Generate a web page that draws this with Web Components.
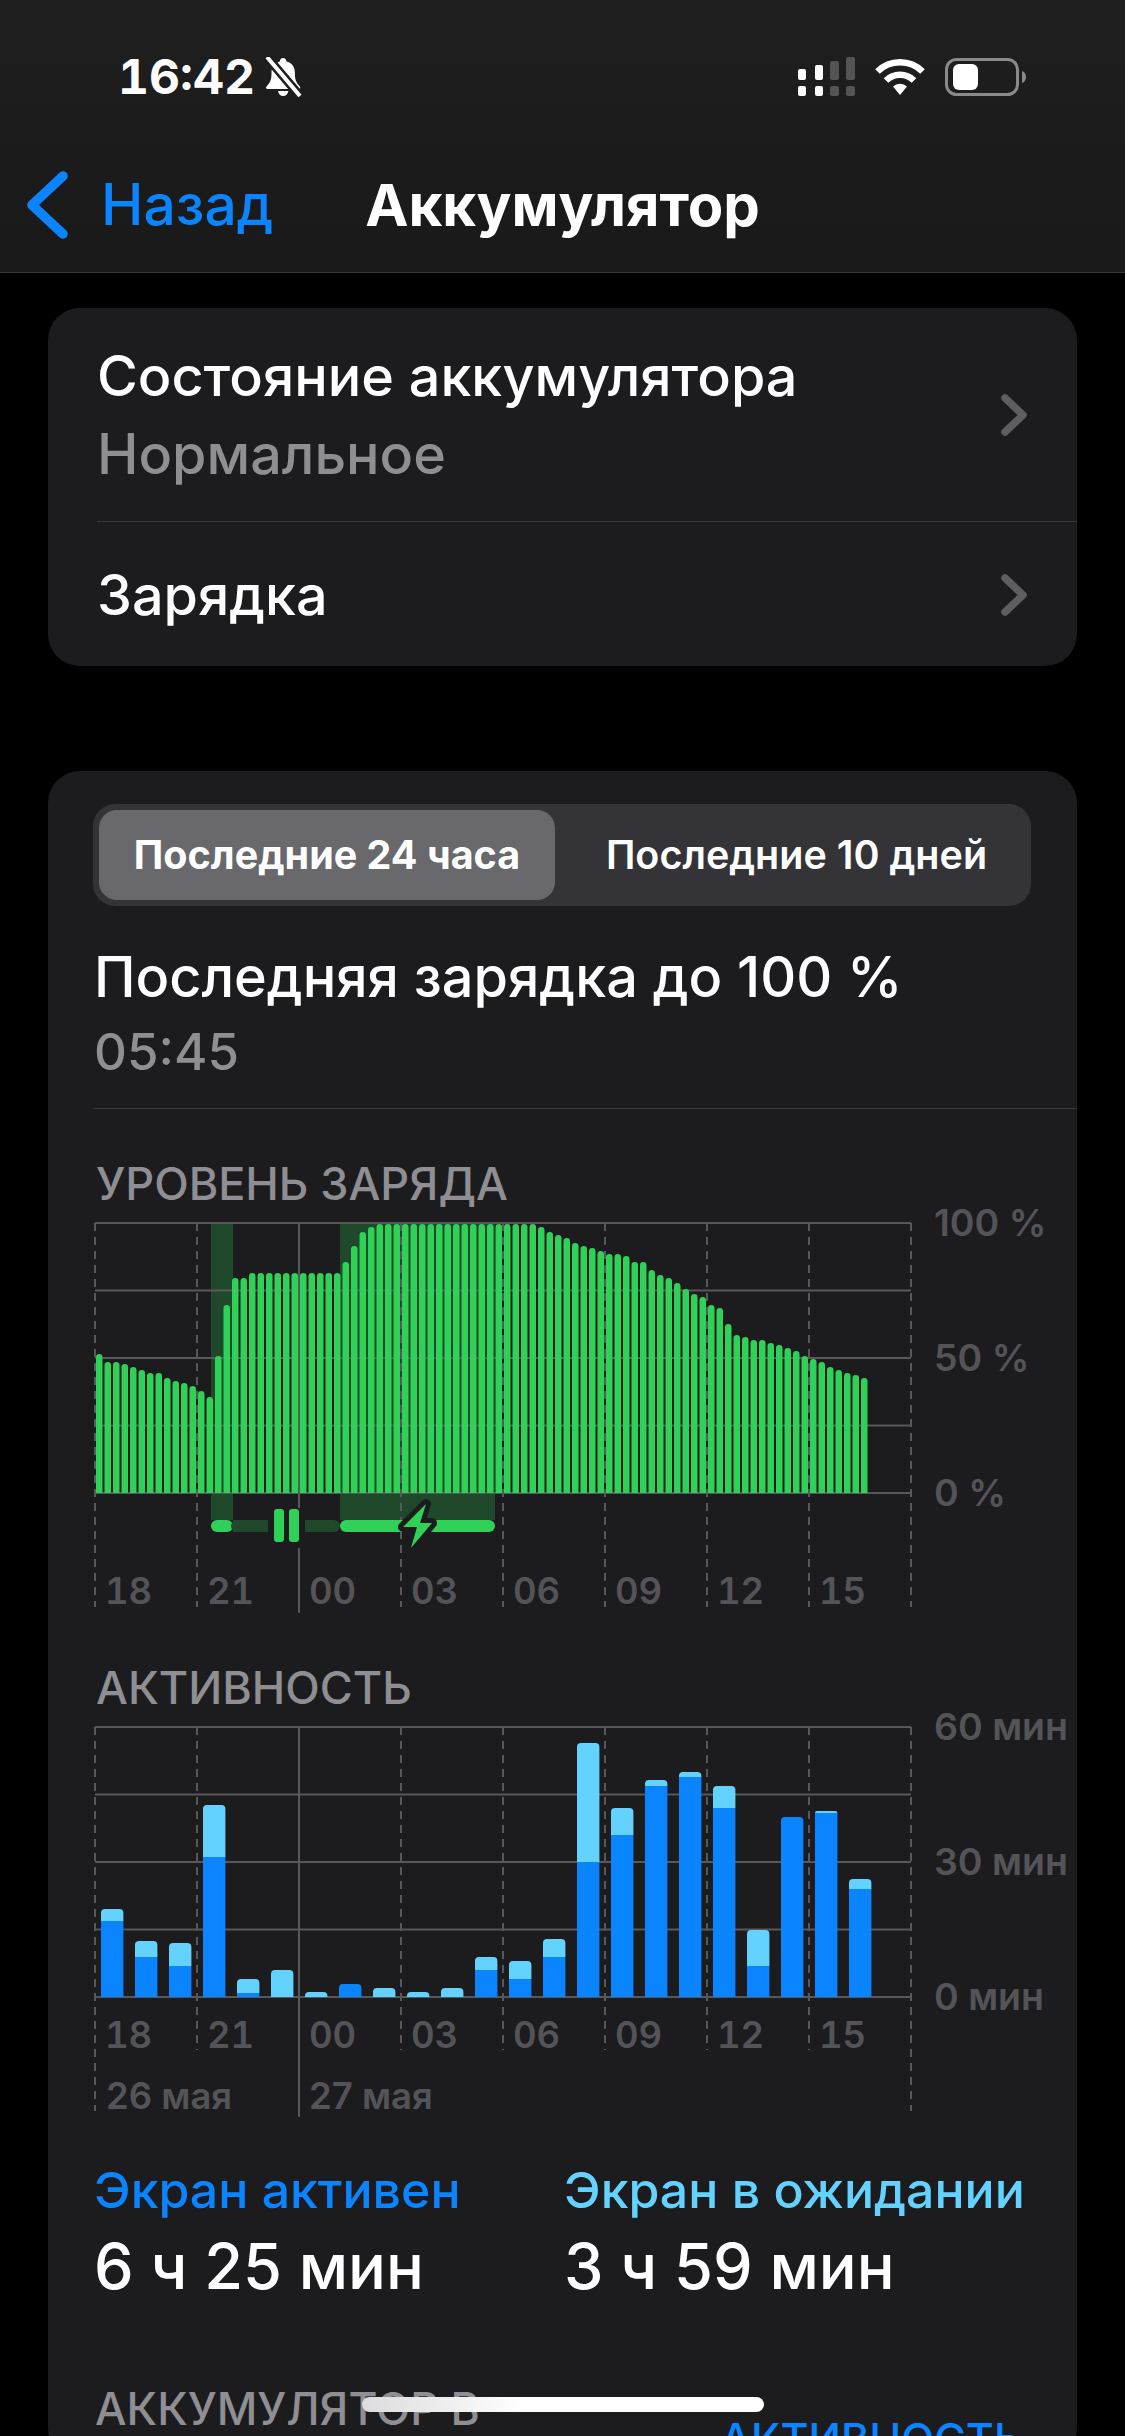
<!DOCTYPE html>
<html lang="ru">
<head>
<meta charset="utf-8">
<title>Аккумулятор</title>
<style>
	html, body { margin: 0; padding: 0; background: #000; }
	body { font-family: Inter, "Noto Sans", sans-serif; color: #fff; }
</style>
</head>
<body>
<battery-screen>
	<status-bar slot="top" time="16:42"></status-bar>
	<nav-bar slot="top" back="Назад">Аккумулятор</nav-bar>

	<settings-card>
		<settings-row sub="Нормальное" tall>Состояние аккумулятора</settings-row>
		<settings-row>Зарядка</settings-row>
	</settings-card>

	<usage-card>
		<segment-control first="Последние 24 часа" second="Последние 10 дней"></segment-control>
		<last-charge time="05:45">Последняя зарядка до 100 %</last-charge>
		<usage-chart kind="level" heading="УРОВЕНЬ ЗАРЯДА"></usage-chart>
		<usage-chart kind="activity" heading="АКТИВНОСТЬ"></usage-chart>
		<screen-legend></screen-legend>
		<section-footer></section-footer>
	</usage-card>
</battery-screen>

<script>
class BatteryScreen extends HTMLElement {
	constructor() {
		super();
		let tpl = document.createElement('template');
		tpl.innerHTML = `
			<style>
				:host {
					display: block;
					position: relative;
					width: 1125px;
					height: 2436px;
					overflow: hidden;
					background: #000;
				}
				.top {
					background: linear-gradient(#1f1f1f, #191919);
					border-bottom: 1px solid #363636;
					height: 272px;
				}
				.home {
					position: absolute;
					left: 362px;
					top: 2397px;
					width: 402px;
					height: 15px;
					border-radius: 8px;
					background: linear-gradient(90deg, #dcdcdc, #fff 40%);
				}
			</style>
			<div class="top"><slot name="top"></slot></div>
			<slot></slot>
			<div class="home"></div>
		`;
		this.attachShadow({mode: 'open'}).appendChild(tpl.content.cloneNode(true));
	}
}

class StatusBar extends HTMLElement {
	constructor() {
		super();
		let root = this.attachShadow({mode: 'open'});
		root.innerHTML = `
			<style>
				:host {
					display: flex;
					align-items: center;
					justify-content: space-between;
					height: 153px;
					padding: 0 99px 0 118px;
					box-sizing: border-box;
				}
				.left { display: flex; align-items: center; gap: 9px; }
				.time { font-size: 48px; font-weight: 700; font-feature-settings: "tnum"; line-height: 54px; }
				.right { display: flex; align-items: center; gap: 20px; }
				svg { display: block; }
			</style>
			<div class="left">
				<span class="time">${this.getAttribute('time')}</span>
				<svg width="40" height="40" viewBox="0 0 40 40">
					<path d="M19 1c-2 0-3 1.500-3.200 3.500C9.500 6 7.500 11 7.500 16c0 5-.5 9-5 13.500-1 1.300-.3 2.500 1.200 2.500h31c1.500 0 2.200-1.200 1.200-2.500-4.500-4.500-5-8.500-5-13.500 0-5-2-10-8.300-11.500C22 2.500 21 1 19 1zM14 34c.6 3 2.500 5 5.200 5s4.600-2 5.200-5z" fill="#fff"/>
					<path d="M3 0l33 39" stroke="#1e1e1e" stroke-width="9"/>
					<path d="M3 0l33 39" stroke="#fff" stroke-width="4"/>
				</svg>
			</div>
			<div class="right">
				<svg width="57" height="40" viewBox="0 0 57 40">
					<rect x="0" y="12" width="8" height="11" rx="2" fill="#fff"/>
					<rect x="17" y="8" width="8" height="15" rx="2" fill="#fff"/>
					<rect x="32" y="4" width="9" height="19" rx="2" fill="#545454"/>
					<rect x="48" y="0" width="9" height="23" rx="2" fill="#545454"/>
					<rect x="0" y="29" width="8" height="10" rx="2" fill="#fff"/>
					<rect x="17" y="29" width="8" height="10" rx="2" fill="#fff"/>
					<rect x="32" y="29" width="9" height="10" rx="2" fill="#545454"/>
					<rect x="48" y="29" width="9" height="10" rx="2" fill="#545454"/>
				</svg>
				<svg width="50" height="37" viewBox="0 0 50 37">
					<path d="M2.500 13.500a32 32 0 0 1 45 0" fill="none" stroke="#fff" stroke-width="6.500"/>
					<path d="M11 22.500a20 20 0 0 1 28 0" fill="none" stroke="#fff" stroke-width="6.500"/>
					<path d="M18 28.500a10 10 0 0 1 14 0L25 37z" fill="#fff"/>
				</svg>
				<svg width="81" height="38" viewBox="0 0 81 38">
					<rect x="1.500" y="1.500" width="71" height="35" rx="10" fill="none" stroke="#8a8a8a" stroke-width="3"/>
					<rect x="8" y="6" width="25" height="26" rx="6" fill="#fff"/>
					<path d="M77 13c2.500 .8 4 3 4 6s-1.500 5.200-4 6z" fill="#8a8a8a"/>
				</svg>
			</div>
		`;
	}
}

class NavBar extends HTMLElement {
	constructor() {
		super();
		let root = this.attachShadow({mode: 'open'});
		root.innerHTML = `
			<style>
				:host {
					display: grid;
					grid-template-columns: 1fr auto 1fr;
					align-items: center;
					height: 103px;
					font-size: 57px;
					line-height: 62px;
				}
				.back {
					display: flex;
					align-items: center;
					gap: 31px;
					padding-left: 26px;
					color: #0a84ff;
					font-weight: 500;
				}
				.title { font-size: 58px; font-weight: 700; }
				svg { display: block; }
			</style>
			<div class="back">
				<svg width="44" height="68" viewBox="0 0 44 68">
					<path d="M37 5L6 34l31 29" fill="none" stroke="#0a84ff" stroke-width="9.500" stroke-linecap="round" stroke-linejoin="round"/>
				</svg>
				<span>${this.getAttribute('back')}</span>
			</div>
			<div class="title"><slot></slot></div>
			<div></div>
		`;
	}
}

class SettingsCard extends HTMLElement {
	constructor() {
		super();
		this.attachShadow({mode: 'open'}).innerHTML = `
			<style>
				:host {
					display: block;
					margin: 35px 48px 0;
					background: #1c1c1e;
					border-radius: 32px;
				}
			</style>
			<slot></slot>
		`;
	}
}

class SettingsRow extends HTMLElement {
	constructor() {
		super();
		let sub = this.getAttribute('sub');
		let root = this.attachShadow({mode: 'open'});
		root.innerHTML = `
			<style>
				:host {
					display: flex;
					position: relative;
					align-items: center;
					justify-content: space-between;
					box-sizing: border-box;
					height: 144px;
					padding: 2px 48px 0 49px;
					font-size: 55.700px;
					font-weight: 500;
				}
				:host([tall]) {
					height: 214px;
					padding-top: 0;
				}
				:host(:not(:last-child)) .line {
					display: block;
				}
				.line {
					display: none;
					position: absolute;
					left: 49px;
					right: 0;
					bottom: 0;
					height: 1px;
					background: #38383a;
				}
				.main { line-height: 62px; }
				.sub { line-height: 62px; color: #8e8e93; margin-top: 16px; }
				svg { display: block; }
			</style>
			<div>
				<div class="main"><slot></slot></div>
				${sub ? `<div class="sub">${sub}</div>` : ''}
			</div>
			<svg width="30" height="42" viewBox="0 0 30 42">
				<path d="M6 4l18 17L6 38" fill="none" stroke="#5e5e62" stroke-width="7.500" stroke-linecap="round" stroke-linejoin="round"/>
			</svg>
			<div class="line"></div>
		`;
	}
}

class UsageCard extends HTMLElement {
	constructor() {
		super();
		this.attachShadow({mode: 'open'}).innerHTML = `
			<style>
				:host {
					display: block;
					margin: 105px 48px 0;
					padding: 33px 0 0 45px;
					background: #1c1c1e;
					border-radius: 32px;
				}
			</style>
			<slot></slot>
		`;
	}
}

class SegmentControl extends HTMLElement {
	constructor() {
		super();
		this.attachShadow({mode: 'open'}).innerHTML = `
			<style>
				:host {
					display: flex;
					width: 938px;
					height: 102px;
					margin-right: 46px;
					padding: 6px;
					box-sizing: border-box;
					background: #333338;
					border-radius: 22px;
					font-size: 39.500px;
					line-height: 44px;
				}
				div {
					display: flex;
					align-items: center;
					justify-content: center;
					flex: 1;
					border-radius: 18px;
					padding-left: 13px;
					font-weight: 600;
				}
				.on {
					flex: none;
					width: 456px;
					padding-left: 0;
					background: #68686d;
					font-weight: 700;
				}
			</style>
			<div class="on">${this.getAttribute('first')}</div>
			<div>${this.getAttribute('second')}</div>
		`;
	}
}

class LastCharge extends HTMLElement {
	constructor() {
		super();
		this.attachShadow({mode: 'open'}).innerHTML = `
			<style>
				:host {
					display: block;
					padding: 40px 0 26px 1px;
					border-bottom: 1px solid #38383a;
				}
				.title { font-size: 55.800px; font-weight: 500; line-height: 62px; }
				.time { font-size: 51px; font-weight: 500; line-height: 60px; margin-top: 14px; color: #8e8e93; }
			</style>
			<div class="title"><slot></slot></div>
			<div class="time">${this.getAttribute('time')}</div>
		`;
	}
}

// высоты столбиков в пикселях снизу вверх, шаг 15 минут
const LEVELS = [139, 131, 131, 129, 126, 123, 120, 120, 115, 112, 110, 107, 102, 96,
	137, 188, 215, 215,
	220, 220, 220, 220, 220, 220, 220, 220, 220, 220, 220,
	231, 247, 261, 266,
	269, 269, 269, 269, 269, 269, 269, 269, 269, 269, 269, 269, 269, 269, 269, 269, 269, 269, 269,
	266, 261, 258, 255, 250, 247, 245, 242, 239, 239, 237, 231, 231, 223, 218, 215, 210, 204, 199, 196, 188, 185,
	169, 158, 156, 153, 153, 150, 148, 145, 142, 137, 134, 131, 126, 123, 120, 118, 115];

// [экран активен, экран в ожидании] по часам
const ACTIVITY = [[76, 12], [40, 16], [31, 23], [140, 52], [4, 14], [0, 27], [0, 5], [13, 0], [0, 9], [0, 5], [0, 9],
	[27, 13], [18, 18], [40, 18], [135, 119], [162, 27], [211, 6], [220, 5], [189, 22], [31, 36], [180, 0], [184, 2], [108, 10]];

const HOURS = ['18', '21', '00', '03', '06', '09', '12', '15'];
const GRID = '#58585b';
const PLOT_H = 270;

function topRound(x, y, w, h, r) {
	if (h < r) r = h;
	return `M${x} ${y + h}V${y + r}a${r} ${r} 0 0 1 ${r} ${-r}H${x + w - r}a${r} ${r} 0 0 1 ${r} ${r}V${y + h}Z`;
}

class UsageChart extends HTMLElement {
	constructor() {
		super();
		let kind = this.getAttribute('kind');
		let root = this.attachShadow({mode: 'open'});
		let activity = kind === 'activity';
		let axis = activity ? ['60 мин', '30 мин', '0 мин'] : ['100 %', '50 %', '0 %'];
		root.innerHTML = `
			<style>
				:host {
					display: block;
					padding-top: 53px;
				}
				.heading {
					font-size: 45px;
					font-weight: 500;
					line-height: 44px;
					margin: 0 0 17px 3px;
					color: #8e8e93;
				}
				.body { display: flex; align-items: flex-start; }
				.canvas {
					position: relative;
					width: 819px;
					height: 390px;
					margin-left: 2px;
				}
				svg { display: block; position: absolute; left: 0; top: 0; overflow: visible; }
				.hours {
					position: absolute;
					left: 0;
					top: ${activity ? 286 : 346}px;
					display: grid;
					grid-template-columns: repeat(8, 102px);
				}
				.days {
					position: absolute;
					left: 0;
					top: 347px;
					display: grid;
					grid-template-columns: 204px 204px;
				}
				.hours span, .days span {
					padding-left: 10px;
					font-size: 36.500px;
					font-weight: 600;
					line-height: 44px;
					color: #545458;
					white-space: nowrap;
				}
				.hours span { font-feature-settings: "tnum"; }
				.days span:first-child { padding-left: 11px; }
				.axis {
					display: flex;
					flex-direction: column;
					justify-content: space-between;
					height: 270px;
					margin-left: 20px;
					font-size: 37.500px;
					font-weight: 600;
					color: #545458;
				}
				.axis span { line-height: 0; white-space: nowrap; }
			</style>
			<div class="heading">${this.getAttribute('heading')}</div>
			<div class="body">
				<div class="canvas">
					${this.drawPlot(activity)}
					<div class="hours">${HOURS.map(h => `<span>${h}</span>`).join('')}</div>
					${activity ? '<div class="days"><span>26 мая</span><span>27 мая</span></div>' : ''}
				</div>
				<div class="axis">${axis.map(t => `<span>${t}</span>`).join('')}</div>
			</div>
		`;
	}

	drawPlot(activity) {
		let out = '';
		if (!activity) out += this.chargeBands();
		for (let i = 0; i <= 4; i++) {
			let y = i * PLOT_H / 4;
			out += `<path d="M0 ${y}H816" stroke="${GRID}" stroke-width="2"/>`;
		}
		for (let i = 0; i <= 8; i++) {
			let x = i * 102;
			let end = 384;
			if (activity && i !== 0 && i !== 8) end = 323;
			if (i === 2) {
				let d = activity ? `M${x} 0V390` : `M${x} 0V285M${x} 325V390`;
				out += `<path d="${d}" stroke="${GRID}" stroke-width="2"/>`;
			} else {
				out += `<path d="M${x} 0V${end}" stroke="${GRID}" stroke-width="2" stroke-dasharray="8 6"/>`;
			}
		}
		out += activity ? this.activityBars() : this.levelBars() + this.chargeStrip();
		return `<svg width="819" height="390" viewBox="0 0 819 390">${out}</svg>`;
	}

	chargeBands() {
		return `<rect x="116" y="0" width="22" height="297" fill="#20482a"/>
			<rect x="245" y="0" width="155" height="297" fill="#20482a"/>`;
	}

	levelBars() {
		return LEVELS.map((h, k) => {
			let x = 1 + k * 8.5;
			return `<path d="${topRound(x, PLOT_H - h, 6.500, h, 3.250)}" fill="#30d158"/>`;
		}).join('');
	}

	chargeStrip() {
		return `<rect x="116" y="297" width="22" height="12" rx="6" fill="#30d158"/>
			<path d="M142 297H173V309H142a6 6 0 0 1 0-12zM210 297H239a6 6 0 0 1 0 12H210z" fill="#20482a"/>
			<rect x="138" y="297" width="8" height="12" fill="#20482a"/>
			<rect x="179" y="286" width="10" height="33" rx="3" fill="#30d158"/>
			<rect x="194" y="286" width="10" height="33" rx="3" fill="#30d158"/>
			<rect x="245" y="297" width="155" height="12" rx="6" fill="#30d158"/>
			<path d="M331 281L308 304H322L316 325L337 300H325Z" fill="#30d158" stroke="#1c1c1e" stroke-width="10" stroke-linejoin="round" paint-order="stroke"/>`;
	}

	activityBars() {
		return ACTIVITY.map(([on, idle], k) => {
			let x = 6 + k * 34;
			let base = PLOT_H;
			let total = on + idle;
			let out = '';
			if (idle) out += `<path d="${topRound(x, base - total, 22.400, idle, 4)}" fill="#64d2ff"/>`;
			if (on) out += idle
				? `<rect x="${x}" y="${base - on}" width="22.400" height="${on}" fill="#0a84ff"/>`
				: `<path d="${topRound(x, base - on, 22.400, on, 4)}" fill="#0a84ff"/>`;
			return out;
		}).join('');
	}
}

class ScreenLegend extends HTMLElement {
	constructor() {
		super();
		this.attachShadow({mode: 'open'}).innerHTML = `
			<style>
				:host {
					display: grid;
					grid-template-columns: 470px auto;
					justify-content: start;
					padding: 43px 0 0 1px;
				}
				.label { font-size: 50px; font-weight: 500; line-height: 60px; }
				.value { font-size: 63px; font-weight: 500; line-height: 72px; margin-top: 10px; }
				.active { color: #0a84ff; }
				.idle { color: #64d2ff; }
			</style>
			<div>
				<div class="label active">Экран активен</div>
				<div class="value">6 ч 25 мин</div>
			</div>
			<div>
				<div class="label idle">Экран в ожидании</div>
				<div class="value">3 ч 59 мин</div>
			</div>
		`;
	}
}

class SectionFooter extends HTMLElement {
	constructor() {
		super();
		this.attachShadow({mode: 'open'}).innerHTML = `
			<style>
				:host {
					display: flex;
					justify-content: space-between;
					align-items: flex-start;
					padding: 85px 55px 0 2px;
				}
				.name { font-size: 44.500px; font-weight: 500; line-height: 44px; color: #8e8e93; }
				.link { font-size: 43px; font-weight: 500; line-height: 44px; margin-top: 29px; color: #0a84ff; }
			</style>
			<div class="name">АККУМУЛЯТОР В</div>
			<div class="link">АКТИВНОСТЬ</div>
		`;
	}
}

customElements.define('battery-screen', BatteryScreen);
customElements.define('status-bar', StatusBar);
customElements.define('nav-bar', NavBar);
customElements.define('settings-card', SettingsCard);
customElements.define('settings-row', SettingsRow);
customElements.define('usage-card', UsageCard);
customElements.define('segment-control', SegmentControl);
customElements.define('last-charge', LastCharge);
customElements.define('usage-chart', UsageChart);
customElements.define('screen-legend', ScreenLegend);
customElements.define('section-footer', SectionFooter);
</script>
</body>
</html>
